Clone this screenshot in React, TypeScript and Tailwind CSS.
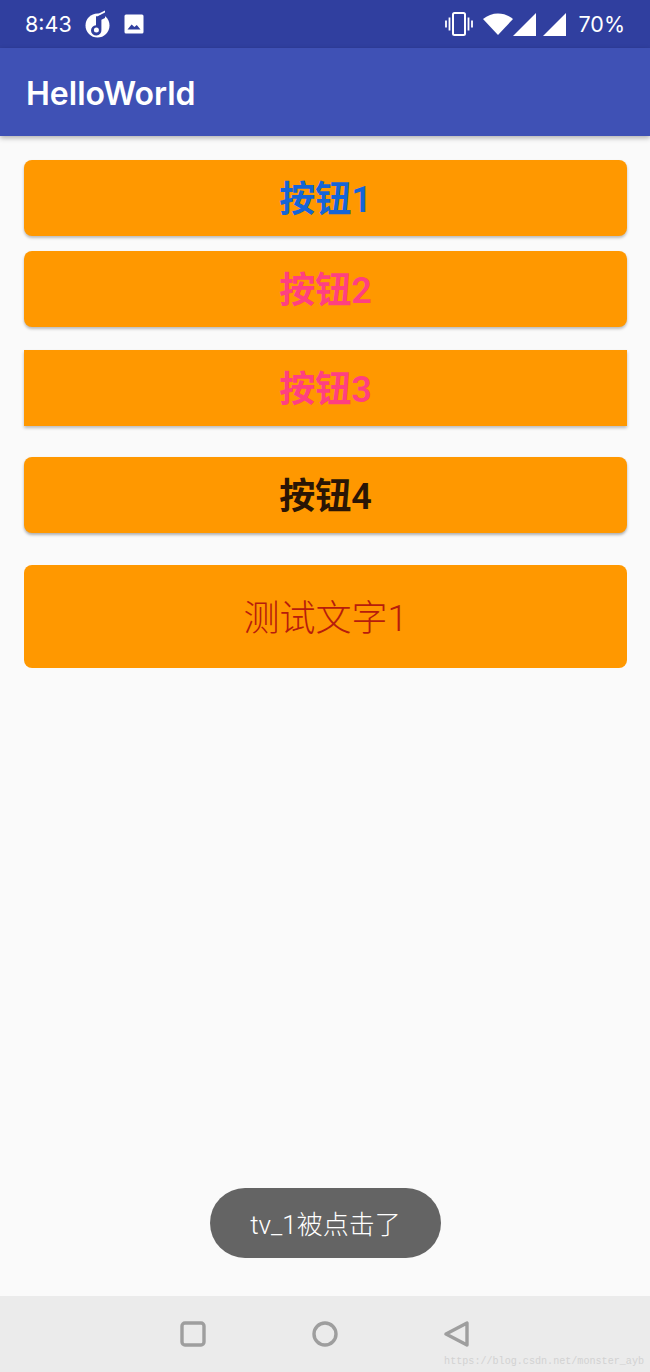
const cjk = 'font-["Roboto","Noto_Sans_CJK_SC",sans-serif]'

function StatusBar() {
  return (
    <div className="flex h-[48px] items-center justify-between bg-[#303f9f] pl-[25px] pr-[25px] text-white">
      <div className="flex items-center">
        <span className="pt-[2px] text-[21.5px] leading-none font-['Inter',sans-serif]">8:43</span>
        {/* music app */}
        <svg className="ml-[13px]" width="25" height="28" viewBox="0 0 25 28">
          <circle cx="12.5" cy="15.5" r="12" fill="#fff" />
          <path d="M11 6.5 L20 2 L20 8 L16.4 9.8 L16.4 20 A5.2 5.2 0 1 1 11 15.2 Z" fill="#303f9f" />
          <path d="M12 4.5 L20 0.6 L20 2.6 L12 6.6 Z" fill="#fff" />
          <circle cx="11.4" cy="20" r="2.5" fill="#fff" />
        </svg>
        {/* picture */}
        <svg className="ml-[14px]" width="20" height="20" viewBox="0 0 20 20">
          <rect x="0.5" y="0.5" width="19" height="19" rx="1.5" fill="#fff" />
          <path d="M3.5 15.5 L7.6 10.4 L10.4 13 L12.8 11 L16.5 15.5 Z" fill="#303f9f" />
        </svg>
      </div>
      <div className="flex items-center">
        {/* vibrate */}
        <svg width="28" height="26" viewBox="0 0 28 26" fill="none" stroke="#fff">
          <rect x="8" y="2" width="12" height="22" rx="1.5" strokeWidth="2" />
          <path d="M4.5 6.5 V19.5 M1 9.5 V16.5 M23.5 6.5 V19.5 M27 9.5 V16.5" strokeWidth="1.8" />
        </svg>
        {/* wifi */}
        <svg className="ml-[10px]" width="30" height="22" viewBox="0 0 30 22">
          <path d="M0 6 C8.5 -1.5 21.5 -1.5 30 6 L15 22 Z" fill="#fff" />
        </svg>
        {/* signal */}
        <svg width="23" height="23" viewBox="0 0 23 23">
          <path d="M0 23 L23 0 V23 Z" fill="#fff" />
        </svg>
        <svg className="ml-[7px]" width="23" height="23" viewBox="0 0 23 23">
          <path d="M0 23 L23 0 V23 Z" fill="#fff" />
        </svg>
        <span className="ml-[12px] pt-[2px] text-[21.5px] leading-none font-['Inter',sans-serif]">70%</span>
      </div>
    </div>
  )
}

function NavBar() {
  return (
    <div className="relative flex h-[76px] items-center justify-center gap-[106px] bg-[#ebebeb] pb-[1px]">
      <svg width="26" height="26" viewBox="0 0 26 26" fill="none" stroke="#9e9e9e" strokeWidth="3.4">
        <rect x="2" y="2" width="22" height="22" rx="3" />
      </svg>
      <svg width="26" height="26" viewBox="0 0 26 26" fill="none" stroke="#9e9e9e" strokeWidth="3.4">
        <circle cx="13" cy="13" r="11" />
      </svg>
      <svg width="26" height="26" viewBox="0 0 26 26" fill="none" stroke="#9e9e9e" strokeWidth="3.4" strokeLinejoin="round">
        <path d="M23 2 V24 L2 13 Z" />
      </svg>
      <span className="absolute right-[6px] bottom-[5px] text-[10.1px] leading-none text-[#d2d2d2] font-['Liberation_Mono',monospace]">
        https://blog.csdn.net/monster_ayb
      </span>
    </div>
  )
}

export default function App() {
  return (
    <div className={`flex h-[1372px] w-[650px] flex-col overflow-hidden bg-[#fafafa] ${cjk}`}>
      <StatusBar />
      <div className="z-10 flex h-[88px] items-center bg-[#3f51b5] pl-[26px] pt-[3px] shadow-[0_2px_5px_rgba(0,0,0,0.3)]">
        <h1 className="text-[32px] leading-none font-semibold text-white font-['Inter',sans-serif]">HelloWorld</h1>
      </div>

      <div className="relative flex-1 px-[24px] pt-[24px]">
        <button className="flex h-[76px] w-[603px] items-center justify-center rounded-[8px] bg-[#ff9800] pt-[4px] text-[36px] font-semibold text-[#1565d8] shadow-[0_2px_3px_rgba(0,0,0,0.25)]">
          按钮1
        </button>
        <button className="mt-[15px] flex h-[76px] w-[603px] items-center justify-center rounded-[8px] bg-[#ff9800] pt-[4px] text-[36px] font-semibold text-[#ff4081] shadow-[0_2px_3px_rgba(0,0,0,0.25)]">
          按钮2
        </button>
        <button className="mt-[23px] flex h-[76px] w-[603px] items-center justify-center bg-[#ff9800] pt-[4px] text-[36px] font-semibold text-[#ff4081] shadow-[0_2px_3px_rgba(0,0,0,0.25)]">
          按钮3
        </button>
        <button className="mt-[31px] flex h-[76px] w-[603px] items-center justify-center rounded-[8px] bg-[#ff9800] pt-[4px] text-[36px] font-semibold text-[#2a1505] shadow-[0_2px_3px_rgba(0,0,0,0.3)]">
          按钮4
        </button>
        <div className="mt-[32px] flex h-[103px] w-[603px] items-center justify-center rounded-[8px] bg-[#ff9800] pt-[4px] text-[36px] font-light text-[#b71c0c]">
          测试文字1
        </div>

        {/* toast */}
        <div className="absolute top-[1052px] left-[210px] flex h-[70px] w-[231px] items-center justify-center rounded-full bg-[#646464] pt-[4px] text-[26px] font-light text-white">
          tv_1被点击了
        </div>
      </div>

      <NavBar />
    </div>
  )
}
